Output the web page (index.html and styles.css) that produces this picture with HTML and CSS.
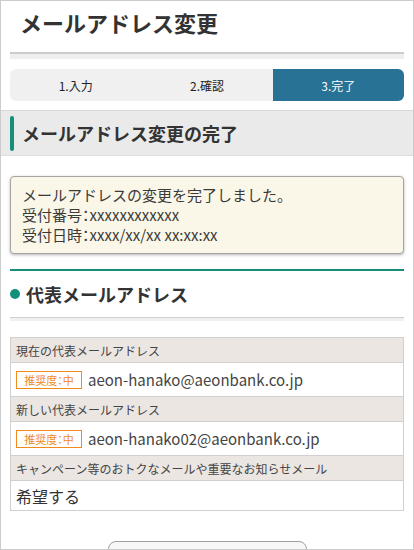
FILE: index.html
```html
<!DOCTYPE html>
<html lang="ja">

<head>
    <meta charset="UTF-8">
    <title>メールアドレス変更</title>
    <link rel="stylesheet" href="styles.css">
</head>

<body>
    <div class="pagina">

        <div class="titulo">
            <h1>メールアドレス変更</h1>
        </div>

        <ol class="pasos">
            <li>1.入力</li>
            <li>2.確認</li>
            <li class="actual">3.完了</li>
        </ol>

        <h2 class="seccion">メールアドレス変更の完了</h2>

        <div class="aviso">
            メールアドレスの変更を完了しました。<br>
            受付番号<span class="dp">：</span>xxxxxxxxxxxx<br>
            受付日時<span class="dp">：</span>xxxx/xx/xx xx:xx:xx
        </div>

        <div class="bloque">
            <h3>代表メールアドレス</h3>
        </div>

        <table class="datos">
            <tr>
                <th>現在の代表メールアドレス</th>
            </tr>
            <tr>
                <td><span class="nivel">推奨度<span class="dp">：</span>中</span>aeon-hanako@aeonbank.co.jp</td>
            </tr>
            <tr>
                <th>新しい代表メールアドレス</th>
            </tr>
            <tr>
                <td><span class="nivel">推奨度<span class="dp">：</span>中</span>aeon-hanako02@aeonbank.co.jp</td>
            </tr>
            <tr>
                <th>キャンペーン等のおトクなメールや重要なお知らせメール</th>
            </tr>
            <tr>
                <td class="simple">希望する</td>
            </tr>
        </table>

        <div class="acciones">
            <button type="button">トップへ戻る</button>
        </div>

    </div>
</body>

</html>
```

FILE: styles.css
```css
html,
body {
    margin: 0;
    padding: 0;
}

body {
    font-family: "Noto Sans CJK JP", "Noto Sans", sans-serif;
    color: #333;
    background: #fff;
}

.pagina {
    height: 550px;
    box-sizing: border-box;
    border: 1px solid #ccc;
    overflow: hidden;
}

.dp {
    font-feature-settings: "palt";
}

.titulo {
    margin: 0 9px;
    border-bottom: 2px solid #ccc;
    box-shadow: 0 5px 0 #eee;
}

.titulo h1 {
    margin: 0;
    padding: 3px 0 12px 10px;
    font-size: 22px;
    line-height: 36px;
    font-weight: bold;
    color: #333;
}

.pasos {
    display: flex;
    list-style: none;
    margin: 15px 9px 0;
    padding: 0;
    height: 32px;
    border-radius: 6px;
    background: #f0f0f0;
    overflow: hidden;
}

.pasos li {
    flex: 1;
    display: flex;
    align-items: center;
    justify-content: center;
    font-size: 12px;
    color: #222;
}

.pasos li.actual {
    background: #287395;
    color: #fff;
}

.seccion {
    margin: 9px 0 0;
    padding: 5px 9px 4px;
    border-top: 1px solid #d9d9d9;
    border-bottom: 1px solid #ddd;
    background: #eaeaea;
    font-size: 18px;
    line-height: 35px;
    font-weight: bold;
    color: #333;
    display: flex;
    align-items: center;
}

.seccion::before {
    content: "";
    width: 4px;
    height: 35px;
    margin-right: 8px;
    border-radius: 2px;
    background: #14907a;
}

.aviso {
    margin: 20px 9px 0;
    padding: 8px 11px;
    border: 1px solid #a5a5a5;
    border-radius: 4px;
    background: #faf7e8;
    box-shadow: 0 1px 3px rgba(0, 0, 0, 0.3);
    font-size: 15px;
    line-height: 20px;
    color: #3a3a3a;
}

.bloque {
    margin: 15px 9px 0;
    border-top: 2px solid #158f78;
}

.bloque h3 {
    display: flex;
    align-items: center;
    margin: 0;
    padding: 11px 0 11px;
    border-bottom: 1px solid #d0d0d0;
    box-shadow: 0 3px 0 #f0f0f0;
    font-size: 18px;
    line-height: 24px;
    font-weight: bold;
    color: #333;
}

.bloque h3::before {
    content: "";
    width: 10px;
    height: 10px;
    margin-right: 6px;
    border-radius: 50%;
    background: #14907a;
}

.datos {
    width: calc(100% - 18px);
    margin: 19px 9px 0;
    border-collapse: collapse;
}

.datos th,
.datos td {
    border: 1px solid #d0d0d0;
    text-align: left;
}

.datos th {
    height: 24px;
    padding: 0 5px;
    background: #ebe6e2;
    font-size: 12px;
    font-weight: normal;
    color: #444;
}

.datos td {
    height: 33px;
    padding: 0 5px;
    font-size: 15px;
    color: #444;
}

.datos td.simple {
    height: 29px;
    font-size: 16px;
    color: #333;
}

.nivel {
    display: inline-block;
    box-sizing: border-box;
    width: 66px;
    height: 18px;
    margin-right: 6px;
    border: 1px solid #f08a1c;
    background: #fff;
    color: #f08a1c;
    font-size: 11px;
    line-height: 16px;
    text-align: center;
    vertical-align: 1px;
}

.acciones {
    margin-top: 30px;
    text-align: center;
}

button {
    width: 199px;
    height: 40px;
    border: 1px solid #a0a0a0;
    border-radius: 8px;
    background: #f7f7f7;
    font-family: inherit;
    font-size: 14px;
    color: #333;
}
```
